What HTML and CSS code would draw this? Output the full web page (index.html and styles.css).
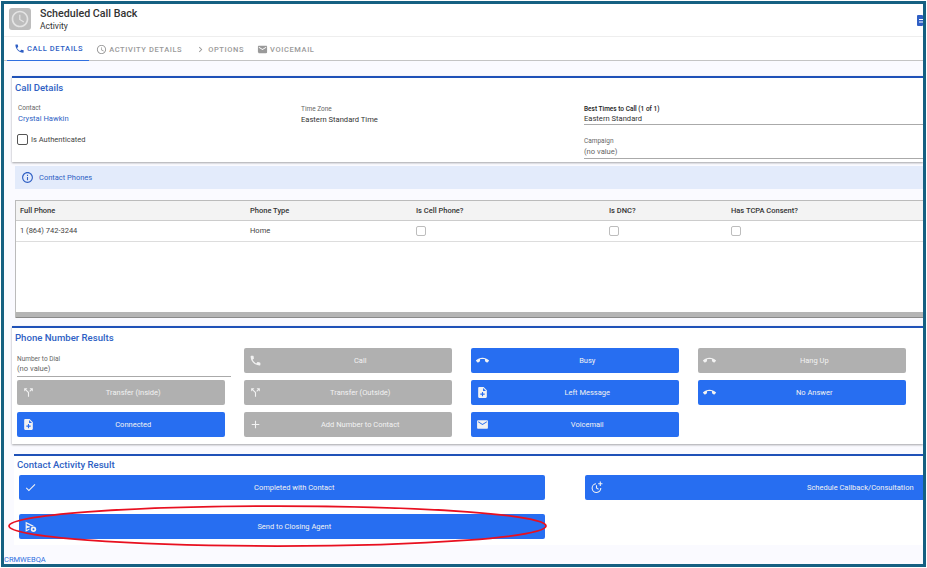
FILE: index.html
```html
<!DOCTYPE html>
<html lang="en">
<head>
    <meta charset="UTF-8">
    <meta name="viewport" content="width=device-width, initial-scale=1.0">
    <title>Scheduled Call Back</title>
    <link rel="stylesheet" href="styles.css">
</head>
<body>
    <svg class="sprites" aria-hidden="true">
        <symbol id="i-phone" viewBox="0 0 24 24"><path d="M6.62 10.79c1.44 2.83 3.76 5.14 6.59 6.59l2.2-2.2c.27-.27.67-.36 1.02-.24 1.12.37 2.33.57 3.57.57.55 0 1 .45 1 1V20c0 .55-.45 1-1 1-9.39 0-17-7.61-17-17 0-.55.45-1 1-1h3.5c.55 0 1 .45 1 1 0 1.25.2 2.45.57 3.57.11.35.03.74-.25 1.02l-2.2 2.2z"/></symbol>
        <symbol id="i-end" viewBox="0 0 24 24"><path d="M12 9c-1.6 0-3.15.25-4.6.72v3.1c0 .39-.23.74-.56.9-.98.49-1.87 1.12-2.66 1.85-.18.18-.43.28-.7.28-.28 0-.53-.11-.71-.29L.29 13.08c-.18-.17-.29-.42-.29-.7 0-.28.11-.53.29-.71C3.34 8.78 7.46 7 12 7s8.66 1.78 11.71 4.67c.18.18.29.43.29.71 0 .28-.11.53-.29.71l-2.48 2.48c-.18.18-.43.29-.71.29-.27 0-.52-.11-.7-.28-.79-.74-1.69-1.36-2.67-1.85-.33-.16-.56-.5-.56-.9v-3.1C15.15 9.25 13.6 9 12 9z"/></symbol>
        <symbol id="i-mail" viewBox="0 0 24 24"><path d="M20 4H4c-1.1 0-1.99.9-1.99 2L2 18c0 1.1.9 2 2 2h16c1.1 0 2-.9 2-2V6c0-1.1-.9-2-2-2zm0 4l-8 5-8-5V6l8 5 8-5v2z"/></symbol>
        <symbol id="i-note" viewBox="0 0 24 24"><path d="M14 2H6c-1.1 0-1.99.9-1.99 2L4 20c0 1.1.89 2 1.99 2H18c1.1 0 2-.9 2-2V8l-6-6zm2 14h-3v3h-2v-3H8v-2h3v-3h2v3h3v2zm-3-7V3.5L18.5 9H13z"/></symbol>
        <symbol id="i-split" viewBox="0 0 24 24"><path d="M14 4l2.29 2.29-2.88 2.88 1.42 1.42 2.88-2.88L20 10V4zm-4 0H4v6l2.29-2.29 4.71 4.7V20h2v-8.41l-5.29-5.3z"/></symbol>
        <symbol id="i-add" viewBox="0 0 24 24"><path d="M19 13h-6v6h-2v-6H5v-2h6V5h2v6h6v2z"/></symbol>
        <symbol id="i-check" viewBox="0 0 24 24"><path d="M9 16.17L4.83 12l-1.42 1.41L9 19 21 7l-1.41-1.41z"/></symbol>
        <symbol id="i-info" viewBox="0 0 24 24"><path d="M11 7h2v2h-2zm0 4h2v6h-2zm1-9C6.48 2 2 6.48 2 12s4.48 10 10 10 10-4.48 10-10S17.52 2 12 2zm0 18c-4.41 0-8-3.59-8-8s3.59-8 8-8 8 3.59 8 8-3.59 8-8 8z"/></symbol>
        <symbol id="i-clock" viewBox="0 0 24 24"><path d="M11.99 2C6.47 2 2 6.48 2 12s4.47 10 9.99 10C17.52 22 22 17.52 22 12S17.52 2 11.99 2zM12 20c-4.42 0-8-3.58-8-8s3.58-8 8-8 8 3.58 8 8-3.58 8-8 8zm.5-13H11v6l5.25 3.15.75-1.23-4.5-2.67z"/></symbol>
        <symbol id="i-chevron" viewBox="0 0 24 24"><path d="M10 6L8.59 7.41 13.17 12l-4.58 4.59L10 18l6-6z"/></symbol>
        <symbol id="i-callback" viewBox="0 0 24 24"><path d="M18 1h2v3h3v2h-3v3h-2V6h-3V4h3z"/><path d="M11 4.1v2.05A7 7 0 1 0 18.9 13h2.05A9 9 0 1 1 11 4.1z"/><path d="M11 8h2v4.4l3.3 2-1 1.6-4.3-2.6z"/></symbol>
        <symbol id="i-send" viewBox="0 0 24 24"><path d="M3 3l15 7.5-3 1.5-10-5v3.3l6 1.7v1.4l-6 1.7v3.3l5-2.5v2.2l-7 3.4z"/><circle cx="17.5" cy="17" r="5"/><circle cx="17.5" cy="17" r="1.8" fill="#276ef1"/></symbol>
    </svg>

    <div class="frame">
        <header class="top-bar">
            <div class="record-icon">
                <svg viewBox="0 0 24 24"><use href="#i-clock"/></svg>
            </div>
            <div class="record-title">
                <h1>Scheduled Call Back</h1>
                <span>Activity</span>
            </div>
            <svg class="save-btn" viewBox="0 0 6 11">
                <rect width="6" height="11" rx="1" fill="#2f5fc4"/>
                <rect x="2" y="4" width="4" height="1" fill="#fff"/>
                <rect x="2" y="6.5" width="4" height="1" fill="#fff"/>
            </svg>
        </header>

        <nav class="tabs">
            <a class="tab active"><svg><use href="#i-phone"/></svg>Call Details</a>
            <a class="tab"><svg><use href="#i-clock"/></svg>Activity Details</a>
            <a class="tab"><svg><use href="#i-chevron"/></svg>Options</a>
            <a class="tab"><svg><use href="#i-mail"/></svg>Voicemail</a>
        </nav>

        <main class="content">
            <section class="card card-details">
                <h2>Call Details</h2>
                <div class="details-grid">
                    <div class="col-contact">
                        <div class="field">
                            <label>Contact</label>
                            <a class="value link">Crystal Hawkin</a>
                        </div>
                        <div class="auth-row"><span class="box box-dark"></span>Is Authenticated</div>
                    </div>
                    <div class="col-zone">
                        <div class="field">
                            <label>Time Zone</label>
                            <span class="value">Eastern Standard Time</span>
                        </div>
                    </div>
                    <div class="col-times">
                        <div class="field underlined times-field">
                            <label class="strong">Best Times to Call (1 of 1)</label>
                            <span class="value">Eastern Standard</span>
                        </div>
                        <div class="field underlined campaign-field">
                            <label>Campaign</label>
                            <span class="value muted">(no value)</span>
                        </div>
                    </div>
                </div>
            </section>

            <div class="info-bar">
                <svg><use href="#i-info"/></svg>
                Contact Phones
            </div>

            <div class="phone-table">
                <table>
                    <thead>
                        <tr>
                            <th class="c-phone">Full Phone</th>
                            <th class="c-type">Phone Type</th>
                            <th class="c-cell">Is Cell Phone?</th>
                            <th class="c-dnc">Is DNC?</th>
                            <th>Has TCPA Consent?</th>
                        </tr>
                    </thead>
                    <tbody>
                        <tr>
                            <td>1 (864) 742-3244</td>
                            <td>Home</td>
                            <td><span class="box"></span></td>
                            <td><span class="box"></span></td>
                            <td><span class="box"></span></td>
                        </tr>
                    </tbody>
                </table>
                <div class="table-foot"></div>
            </div>

            <section class="card card-results">
                <h2>Phone Number Results</h2>
                <div class="btn-grid">
                    <div class="field underlined dial-field">
                        <label>Number to Dial</label>
                        <span class="value muted">(no value)</span>
                    </div>
                    <a class="btn off"><svg><use href="#i-phone"/></svg><span>Call</span></a>
                    <a class="btn"><svg><use href="#i-end"/></svg><span>Busy</span></a>
                    <a class="btn off"><svg><use href="#i-end"/></svg><span>Hang Up</span></a>
                    <a class="btn off"><svg><use href="#i-split"/></svg><span>Transfer (Inside)</span></a>
                    <a class="btn off"><svg><use href="#i-split"/></svg><span>Transfer (Outside)</span></a>
                    <a class="btn"><svg><use href="#i-note"/></svg><span>Left Message</span></a>
                    <a class="btn"><svg><use href="#i-end"/></svg><span>No Answer</span></a>
                    <a class="btn"><svg><use href="#i-note"/></svg><span>Connected</span></a>
                    <a class="btn off"><svg><use href="#i-add"/></svg><span>Add Number to Contact</span></a>
                    <a class="btn"><svg><use href="#i-mail"/></svg><span>Voicemail</span></a>
                </div>
            </section>

            <section class="card card-activity">
                <h2>Contact Activity Result</h2>
                <div class="wide-grid">
                    <a class="btn"><svg><use href="#i-check"/></svg><span>Completed with Contact</span></a>
                    <a class="btn"><svg><use href="#i-callback"/></svg><span>Schedule Callback/Consultation</span></a>
                    <a class="btn"><svg><use href="#i-send"/></svg><span>Send to Closing Agent</span></a>
                </div>
            </section>

            <footer class="env">CRMWEBQA</footer>
        </main>

        <!-- callout drawn over the screenshot -->
        <svg class="callout" viewBox="0 0 560 50">
            <ellipse cx="273.5" cy="25" rx="268.5" ry="20"/>
        </svg>
    </div>
</body>
</html>
```

FILE: styles.css
```css
* {
    box-sizing: border-box;
}
html, body {
    margin: 0;
    height: 100%;
    overflow: hidden;
}
body {
    padding: 1px;
    background: white;
    font-family: Roboto, "Liberation Sans", sans-serif;
    font-size: 8px;
    color: #333;
}
.sprites {
    display: none;
}
svg {
    fill: currentColor;
    flex-shrink: 0;
}
.frame {
    position: relative;
    width: 925px;
    height: 566px;
    border: 3px solid #156082;
    background: white;
    overflow: hidden;
    display: flex;
    flex-direction: column;
}

/* header */
.top-bar {
    display: flex;
    height: 33px;
    flex-shrink: 0;
    padding: 4px 0 0 5px;
    border-bottom: 1px solid #eee;
}
.record-icon {
    width: 22px;
    height: 22px;
    border-radius: 3px;
    background: #bdbdbd;
    color: #e4e4e4;
    padding: 1px;
}
.record-icon svg {
    display: block;
    width: 20px;
    height: 20px;
}
.record-title {
    margin: -1px 0 0 9px;
    flex: 1;
}
.record-title h1 {
    margin: 0;
    font-size: 10.7px;
    line-height: 14px;
    font-weight: 500;
    color: #333;
}
.record-title span {
    display: block;
    font-size: 8.5px;
    line-height: 10px;
}
.save-btn {
    width: 6px;
    height: 11px;
    margin-top: 7px;
}

/* tabs */
.tabs {
    display: flex;
    height: 24px;
    flex-shrink: 0;
    padding-left: 3px;
    border-bottom: 1px solid #c4c4c4;
}
.tab {
    display: flex;
    align-items: center;
    gap: 2px;
    padding: 0 6px 0 7px;
    height: 24px;
    font-size: 7.5px;
    font-weight: 500;
    letter-spacing: 0.6px;
    text-transform: uppercase;
    color: #9a9a9a;
}
.tab svg {
    width: 11px;
    height: 11px;
}
.tab.active {
    color: #2f5fc4;
    border-bottom: 1px solid #2f6fe0;
}

/* main */
.content {
    flex: 1;
    background: #fafaff;
    padding-top: 15px;
    overflow: hidden;
}
.card {
    background: white;
    border-top: 2px solid #1f51b8;
    margin-left: 8px;
    box-shadow: 0 1px 2px rgba(0, 0, 0, 0.35);
}
.card h2 {
    margin: 0;
    padding-left: 3px;
    font-size: 9.6px;
    line-height: 14px;
    font-weight: 500;
    color: #2f5fc4;
}
.card-details {
    height: 86px;
    padding-top: 3px;
}
.details-grid {
    display: grid;
    grid-template-columns: 284px 283px 1fr;
    padding: 9px 0 0 5px;
}
.field label {
    display: block;
    font-size: 6.5px;
    line-height: 9px;
    color: #666;
}
.field label.strong {
    color: #222;
    font-weight: 500;
}
.value {
    display: block;
    font-size: 7.6px;
    line-height: 11px;
    color: #333;
}
.value.link {
    color: #2f5fc4;
}
.value.muted {
    color: #666;
}
.underlined {
    border-bottom: 1px solid #aaa;
}
.col-contact .field {
    padding-left: 1px;
}
.col-zone, .col-times {
    padding-top: 1px;
}
.times-field .value {
    line-height: 10px;
}
.campaign-field {
    margin-top: 12px;
}
.campaign-field .value {
    line-height: 12px;
}
.auth-row {
    display: flex;
    align-items: center;
    gap: 3px;
    margin-top: 10px;
    font-size: 7.5px;
    color: #444;
}
.box {
    display: inline-block;
    width: 10px;
    height: 10px;
    border: 1px solid #bdbdbd;
    border-radius: 2px;
    background: white;
    vertical-align: middle;
}
.box-dark {
    width: 11px;
    height: 11px;
    border-color: #555;
}
.info-bar {
    display: flex;
    align-items: center;
    gap: 5px;
    height: 23px;
    margin: 4px 0 0 11px;
    padding-left: 6px;
    background: #e3ebfb;
    font-size: 7.5px;
    color: #2f5fc4;
}
.info-bar svg {
    width: 13px;
    height: 13px;
}

/* phones table */
.phone-table {
    display: flex;
    flex-direction: column;
    height: 118px;
    margin: 11px 0 0 11px;
    background: white;
    border: 1px solid #bbb;
    border-right: 0;
    border-bottom: 0;
}
.phone-table table {
    width: 100%;
    table-layout: fixed;
    border-collapse: collapse;
}
.phone-table th {
    height: 19px;
    padding: 0 0 0 4px;
    text-align: left;
    font-size: 7.5px;
    font-weight: 500;
    color: #333;
    background: #f3f3f3;
    border-bottom: 1px solid #ccc;
}
.phone-table td {
    height: 21px;
    padding: 0 0 0 4px;
    font-size: 7.5px;
    color: #444;
    border-bottom: 1px solid #ddd;
}
.c-phone {
    width: 230px;
}
.c-type {
    width: 166px;
}
.c-cell {
    width: 193px;
}
.c-dnc {
    width: 122px;
}
.table-foot {
    margin-top: auto;
    height: 6px;
    background: #b5b5b5;
    border-bottom: 1px solid #8a8a8a;
}

/* button sections */
.card-results {
    height: 118px;
    margin-top: 8px;
    padding-top: 3px;
}
.btn-grid {
    display: grid;
    grid-template-columns: repeat(4, 208px);
    grid-auto-rows: 25px;
    gap: 7px 19px;
    padding: 3px 0 0 5px;
}
.dial-field {
    width: 214px;
    height: 29px;
    padding-top: 7px;
}
.dial-field .value {
    line-height: 10px;
}
.btn {
    display: flex;
    align-items: center;
    padding-left: 5px;
    border-radius: 2px;
    background: #276ef1;
    color: #f2f2f2;
    font-size: 7.5px;
}
.btn svg {
    width: 13px;
    height: 13px;
    margin-right: 6.5px;
}
.btn span {
    flex: 1;
    text-align: center;
}
.btn.off {
    background: #b0b0b0;
}
.card-activity {
    height: 91px;
    margin: 10px 0 0 10px;
    padding-top: 2px;
    box-shadow: none;
}
.wide-grid {
    display: grid;
    grid-template-columns: 526px 526px;
    grid-auto-rows: 25px;
    gap: 14px 40px;
    padding: 3px 0 0 5px;
}
.env {
    margin-top: 10px;
    font-size: 7.5px;
    color: #2f6fe0;
}
.callout {
    position: absolute;
    left: 0;
    top: 497px;
    width: 560px;
    height: 50px;
    fill: none;
}
.callout ellipse {
    stroke: #e81020;
    stroke-width: 1.75;
}
```
